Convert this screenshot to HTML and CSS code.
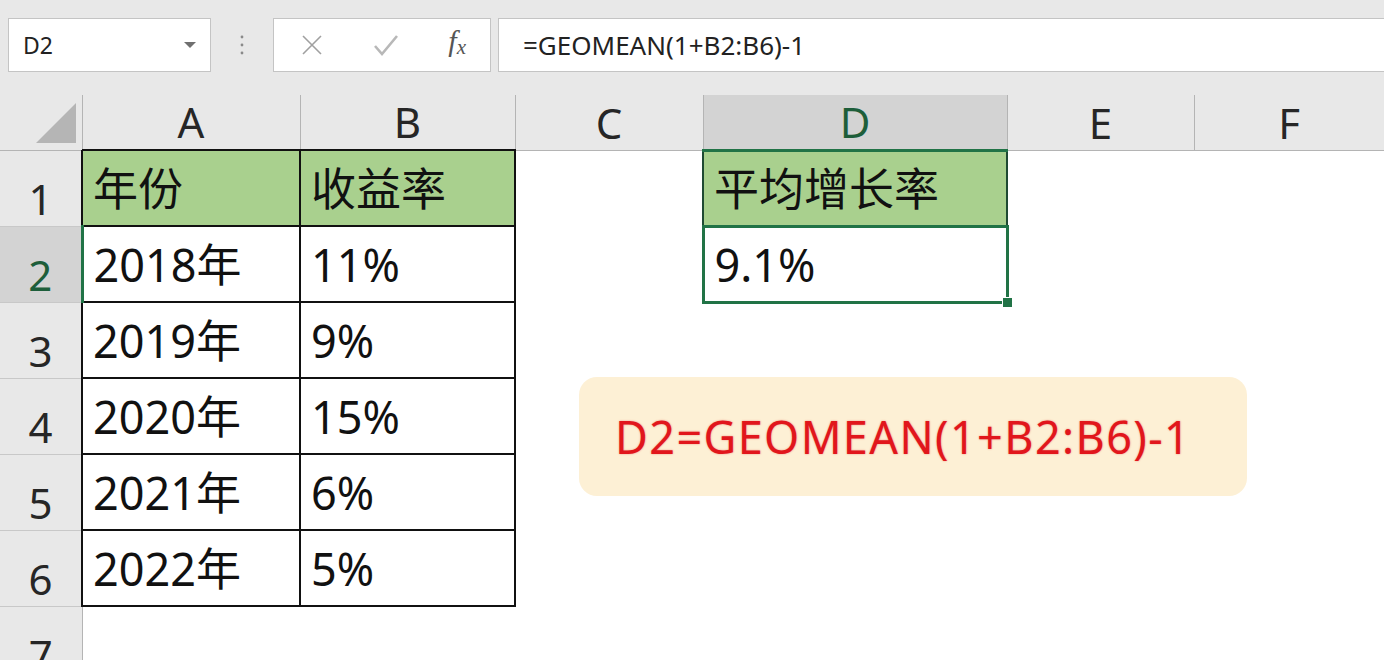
FILE: index.html
```
<!DOCTYPE html>
<html lang="zh">
<head>
<meta charset="utf-8">
<title>GEOMEAN</title>
<link rel="stylesheet" href="styles.css">
</head>
<body>
<div class="toolbar">
	<div class="namebox">
		<span>D2</span>
		<svg class="drop" width="14" height="8" viewBox="0 0 14 8"><path d="M1 1h12L7 7z" fill="#707070"/></svg>
	</div>
	<div class="grip">
		<svg width="4" height="20" viewBox="0 0 4 20"><circle cx="2" cy="2" r="1.4" fill="#8a8a8a"/><circle cx="2" cy="10" r="1.4" fill="#8a8a8a"/><circle cx="2" cy="18" r="1.4" fill="#8a8a8a"/></svg>
	</div>
	<div class="fxbox">
		<svg width="22" height="22" viewBox="0 0 22 22"><path d="M2 2L20 20M20 2L2 20" stroke="#a0a0a0" stroke-width="1.6" fill="none"/></svg>
		<svg width="26" height="22" viewBox="0 0 26 22"><path d="M2 12l7 8L24 2" stroke="#b8b8b8" stroke-width="2.6" fill="none"/></svg>
		<span class="fx">f<sub>x</sub></span>
	</div>
	<div class="formula">=GEOMEAN(1+B2:B6)-1</div>
</div>

<table class="sheet">
	<colgroup>
		<col style="width:82px"><col style="width:218px"><col style="width:215px"><col style="width:188px"><col style="width:304px"><col style="width:187px"><col style="width:190px">
	</colgroup>
	<tr class="head">
		<th class="corner"><span class="tri"></span></th>
		<th>A</th><th>B</th><th>C</th><th class="sel">D</th><th>E</th><th>F</th>
	</tr>
	<tr class="row">
		<th class="rn">1</th>
		<td class="b green">年份</td><td class="b green">收益率</td><td></td><td class="b green dk">平均增长率</td><td></td><td></td>
	</tr>
	<tr class="row">
		<th class="rn sel">2</th>
		<td class="b">2018年</td><td class="b">11%</td><td></td><td class="active">9.1%<span class="handle"></span></td><td></td><td></td>
	</tr>
	<tr class="row">
		<th class="rn">3</th>
		<td class="b">2019年</td><td class="b">9%</td><td></td><td></td><td></td><td></td>
	</tr>
	<tr class="row">
		<th class="rn">4</th>
		<td class="b">2020年</td><td class="b">15%</td><td></td><td></td><td></td><td></td>
	</tr>
	<tr class="row">
		<th class="rn">5</th>
		<td class="b">2021年</td><td class="b">6%</td><td></td><td></td><td></td><td></td>
	</tr>
	<tr class="row">
		<th class="rn">6</th>
		<td class="b">2022年</td><td class="b">5%</td><td></td><td></td><td></td><td></td>
	</tr>
	<tr class="row">
		<th class="rn">7</th>
		<td></td><td></td><td></td><td></td><td></td><td></td>
	</tr>
</table>

<div class="callout">D2=GEOMEAN(1+B2:B6)-1</div>
</body>
</html>
```
FILE: styles.css
```
body{
	margin:0;
	width:1384px;
	height:660px;
	overflow:hidden;
	position:relative;
	background:#fff;
	font-family:"Noto Sans","Noto Sans CJK SC",sans-serif;
}
.toolbar{
	height:95px;
	box-sizing:border-box;
	padding:18px 0 0 8px;
	background:#e8e8e8;
	display:flex;
	align-items:flex-start;
}
.namebox{
	width:203px;
	height:54px;
	box-sizing:border-box;
	background:#fff;
	border:1px solid #c4c4c4;
	display:flex;
	align-items:center;
	justify-content:space-between;
	padding:0 13px 0 14px;
	font-size:23px;
	color:#222;
}
.grip{
	width:62px;
	height:54px;
	display:flex;
	align-items:center;
	justify-content:center;
}
.fxbox{
	width:218px;
	height:54px;
	box-sizing:border-box;
	background:#fff;
	border:1px solid #c4c4c4;
	display:flex;
	align-items:center;
	justify-content:space-between;
	padding:0 24px 0 27px;
}
.fx{
	font-family:"Liberation Serif",serif;
	font-style:italic;
	font-size:30px;
	color:#555;
	margin-top:-6px;
}
.fx sub{
	font-size:21px;
	vertical-align:-3px;
}
.formula{
	flex:1;
	margin-left:7px;
	height:54px;
	box-sizing:border-box;
	background:#fff;
	border:1px solid #c4c4c4;
	border-right:none;
	padding:0 0 0 24px;
	display:flex;
	align-items:center;
	font-size:26px;
	color:#222;
}

.sheet{
	border-collapse:collapse;
	table-layout:fixed;
	width:1384px;
}
.sheet th{
	background:#e8e8e8;
	font-weight:400;
	color:#262626;
	font-size:42px;
	padding:0;
	vertical-align:bottom;
	line-height:1;
}
.head th{
	height:55px;
	border-left:1px solid #b4b4b4;
	border-bottom:1px solid #b4b4b4;
	padding-bottom:6px;
	box-sizing:border-box;
}
.head th.corner{
	border-left:none;
	position:relative;
}
.tri{
	position:absolute;
	left:36px;
	top:8px;
	width:0;
	height:0;
	border-left:40px solid transparent;
	border-bottom:40px solid #b5b5b5;
}
.head th.sel{
	background:#d3d3d3;
	color:#1d5e3a;
	border-bottom:3px solid #217346;
}
.row{
	height:76px;
}
th.rn{
	border-right:1px solid #b4b4b4;
	border-bottom:1px solid #c8c8c8;
	padding-bottom:6px;
}
th.rn.sel{
	background:#d3d3d3;
	color:#1d5e3a;
	border-right:3px solid #217346;
}
.sheet td{
	padding:0 0 0 10px;
	font-size:45px;
	color:#111;
	vertical-align:middle;
	white-space:nowrap;
	line-height:1;
}
td.b{
	border:2px solid #111;
}
td.green{
	background:#a9d08e;
}
td.dk{
	border-color:#1f4a33;
}
td.active{
	border:3px solid #217346;
	position:relative;
}
.handle{
	position:absolute;
	right:-7px;
	bottom:-7px;
	width:9px;
	height:9px;
	background:#217346;
	border:1px solid #fff;
}

.callout{
	position:absolute;
	left:579px;
	top:377px;
	width:668px;
	height:119px;
	box-sizing:border-box;
	border-radius:18px;
	background:#fdf0d5;
	padding-left:36px;
	display:flex;
	align-items:center;
	font-size:45px;
	letter-spacing:1.4px;
	color:#e1161c;
	text-shadow:0 0 2px rgba(220,20,20,0.45);
}
```
